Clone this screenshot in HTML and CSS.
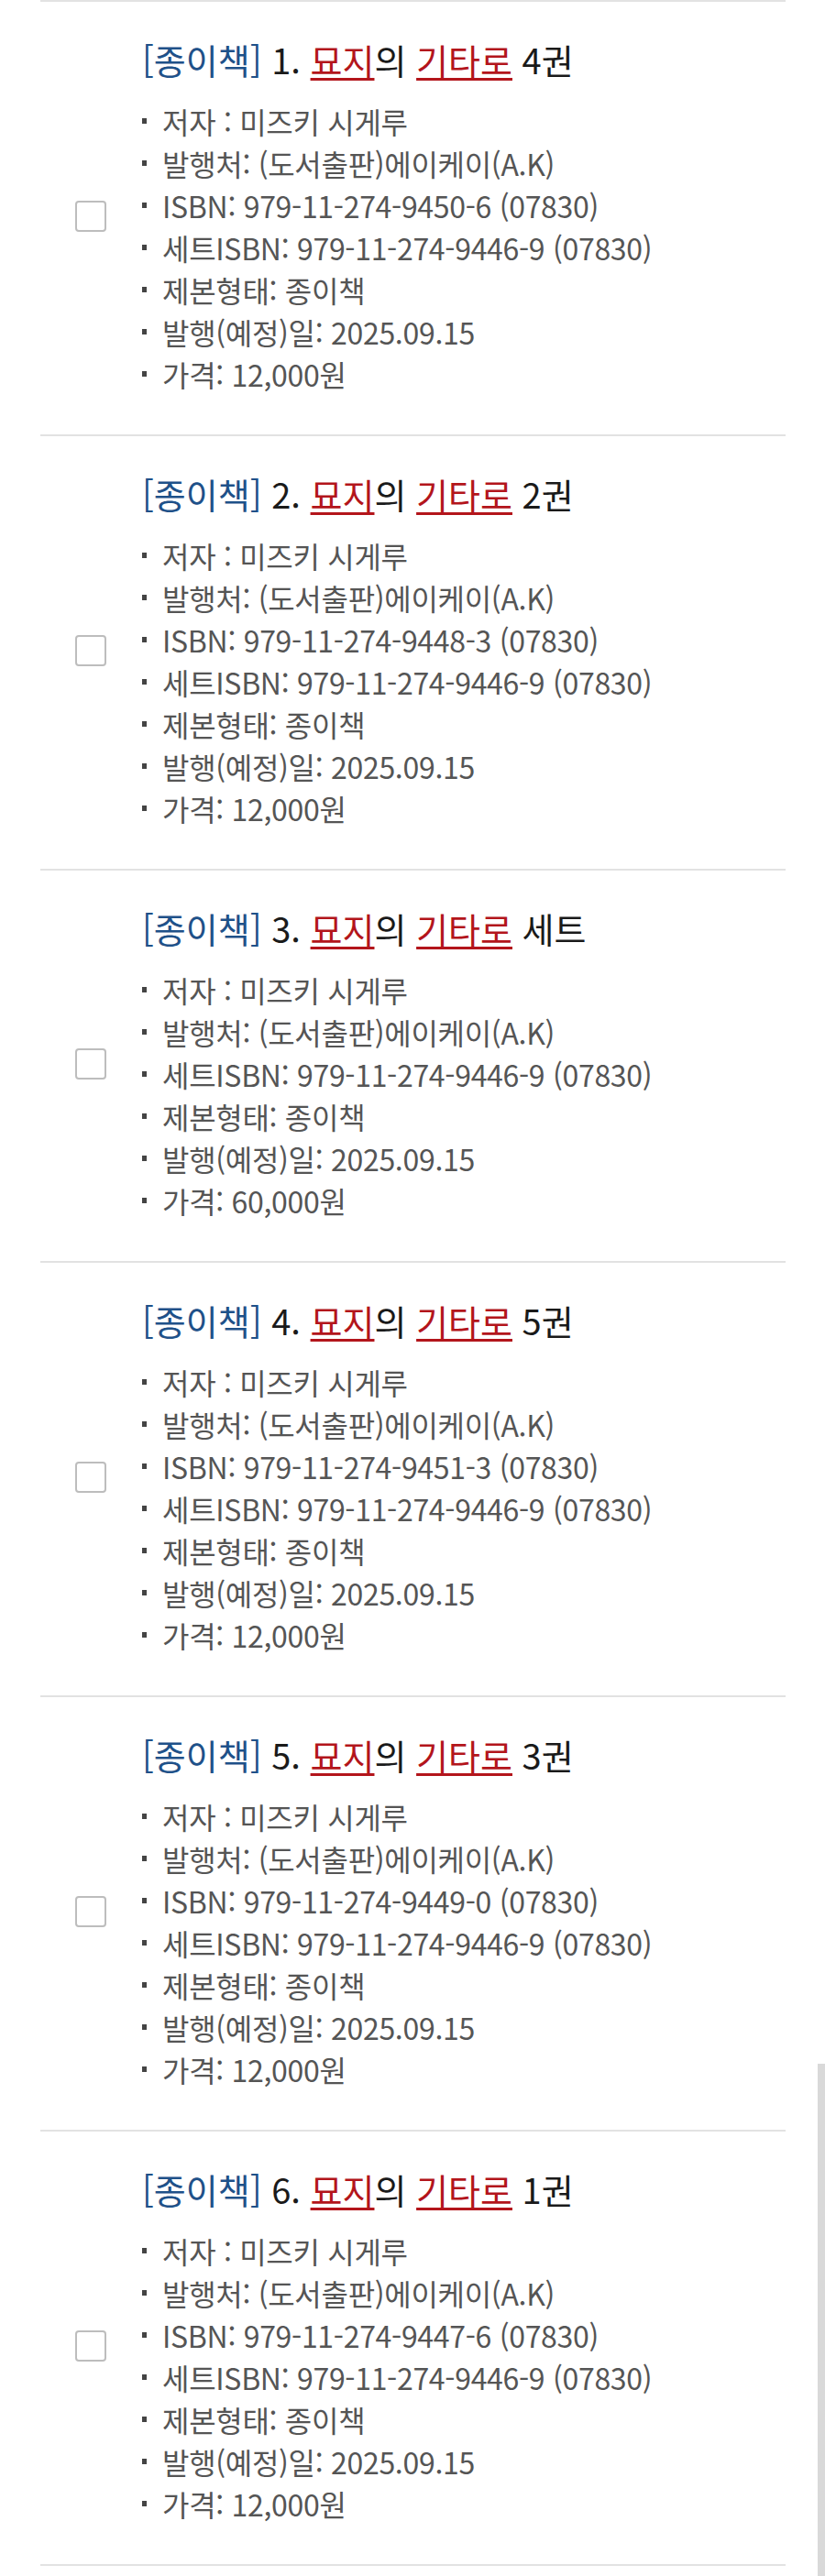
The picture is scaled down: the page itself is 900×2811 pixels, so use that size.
FILE: index.html
```html
<!DOCTYPE html>
<html lang="ko">
<head>
<meta charset="utf-8">
<link rel="stylesheet" href="styles.css">
</head>
<body>
<div class="scrollbar"></div>
<ul class="list">
  <li class="item">
    <span class="check"></span>
    <div class="info">
      <div class="title"><span class="type">[종이책]</span> 1. <u class="hl">묘지</u>의 <u class="hl">기타로</u> 4권</div>
      <ul class="meta">
        <li>저자 : 미즈키 시게루</li>
        <li>발행처: (도서출판)에이케이(A.K)</li>
        <li>ISBN: 979-11-274-9450-6 (07830)</li>
        <li>세트ISBN: 979-11-274-9446-9 (07830)</li>
        <li>제본형태: 종이책</li>
        <li>발행(예정)일: 2025.09.15</li>
        <li>가격: 12,000원</li>
      </ul>
    </div>
  </li>
  <li class="item">
    <span class="check"></span>
    <div class="info">
      <div class="title"><span class="type">[종이책]</span> 2. <u class="hl">묘지</u>의 <u class="hl">기타로</u> 2권</div>
      <ul class="meta">
        <li>저자 : 미즈키 시게루</li>
        <li>발행처: (도서출판)에이케이(A.K)</li>
        <li>ISBN: 979-11-274-9448-3 (07830)</li>
        <li>세트ISBN: 979-11-274-9446-9 (07830)</li>
        <li>제본형태: 종이책</li>
        <li>발행(예정)일: 2025.09.15</li>
        <li>가격: 12,000원</li>
      </ul>
    </div>
  </li>
  <li class="item">
    <span class="check"></span>
    <div class="info">
      <div class="title"><span class="type">[종이책]</span> 3. <u class="hl">묘지</u>의 <u class="hl">기타로</u> 세트</div>
      <ul class="meta">
        <li>저자 : 미즈키 시게루</li>
        <li>발행처: (도서출판)에이케이(A.K)</li>
        <li>세트ISBN: 979-11-274-9446-9 (07830)</li>
        <li>제본형태: 종이책</li>
        <li>발행(예정)일: 2025.09.15</li>
        <li>가격: 60,000원</li>
      </ul>
    </div>
  </li>
  <li class="item">
    <span class="check"></span>
    <div class="info">
      <div class="title"><span class="type">[종이책]</span> 4. <u class="hl">묘지</u>의 <u class="hl">기타로</u> 5권</div>
      <ul class="meta">
        <li>저자 : 미즈키 시게루</li>
        <li>발행처: (도서출판)에이케이(A.K)</li>
        <li>ISBN: 979-11-274-9451-3 (07830)</li>
        <li>세트ISBN: 979-11-274-9446-9 (07830)</li>
        <li>제본형태: 종이책</li>
        <li>발행(예정)일: 2025.09.15</li>
        <li>가격: 12,000원</li>
      </ul>
    </div>
  </li>
  <li class="item">
    <span class="check"></span>
    <div class="info">
      <div class="title"><span class="type">[종이책]</span> 5. <u class="hl">묘지</u>의 <u class="hl">기타로</u> 3권</div>
      <ul class="meta">
        <li>저자 : 미즈키 시게루</li>
        <li>발행처: (도서출판)에이케이(A.K)</li>
        <li>ISBN: 979-11-274-9449-0 (07830)</li>
        <li>세트ISBN: 979-11-274-9446-9 (07830)</li>
        <li>제본형태: 종이책</li>
        <li>발행(예정)일: 2025.09.15</li>
        <li>가격: 12,000원</li>
      </ul>
    </div>
  </li>
  <li class="item">
    <span class="check"></span>
    <div class="info">
      <div class="title"><span class="type">[종이책]</span> 6. <u class="hl">묘지</u>의 <u class="hl">기타로</u> 1권</div>
      <ul class="meta">
        <li>저자 : 미즈키 시게루</li>
        <li>발행처: (도서출판)에이케이(A.K)</li>
        <li>ISBN: 979-11-274-9447-6 (07830)</li>
        <li>세트ISBN: 979-11-274-9446-9 (07830)</li>
        <li>제본형태: 종이책</li>
        <li>발행(예정)일: 2025.09.15</li>
        <li>가격: 12,000원</li>
      </ul>
    </div>
  </li>
</ul>
</body>
</html>
```
FILE: styles.css
```css
html, body {
  margin: 0;
  padding: 0;
  background: #ffffff;
}
body {
  font-family: "Noto Sans CJK KR", "Noto Sans", sans-serif;
  width: 900px;
  height: 2811px;
  overflow: hidden;
  position: relative;
}
.scrollbar {
  position: absolute;
  right: 0;
  top: 2252px;
  width: 8px;
  bottom: 0;
  background: #d9d9d9;
}
.list {
  list-style: none;
  margin: 0 0 0 44px;
  padding: 0;
  width: 813px;
  border-top: 2px solid #e2e2e2;
}
.item {
  display: flex;
  align-items: center;
  border-bottom: 2px solid #e2e2e2;
  padding: 38px 0 43px 38px;
}
.check {
  flex: none;
  width: 30px;
  height: 30px;
  border: 2px solid #bdbdbd;
  border-radius: 4px;
  margin-right: 39px;
}
.title {
  font-size: 38px;
  line-height: 50px;
  font-weight: 400;
  letter-spacing: 0;
  color: #1a1a1a;
  margin-bottom: 19px;
}
.type {
  color: #1f5189;
}
.hl {
  color: #b3151b;
  text-decoration-thickness: 3px;
  text-underline-offset: 4px;
}
.meta {
  list-style: none;
  margin: 0;
  padding: 0;
}
.meta li {
  font-size: 32px;
  line-height: 46px;
  letter-spacing: -0.3px;
  color: #555555;
  display: flex;
  align-items: center;
}
.meta li::before {
  content: "";
  flex: none;
  width: 5px;
  height: 6px;
  background: #444444;
  margin: 0 17px 0 0;
}
```
